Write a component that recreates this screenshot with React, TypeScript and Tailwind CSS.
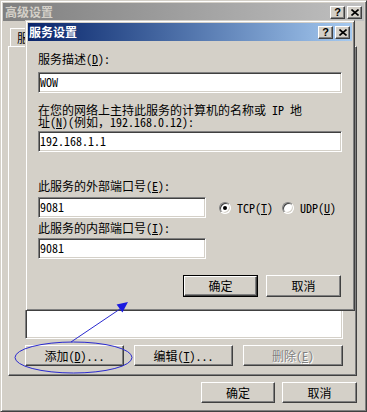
import type { ReactNode } from "react";

const raised =
  "border border-t-white border-l-white border-r-[#404040] border-b-[#404040] shadow-[inset_-1px_-1px_0_#808080]";
const sunken =
  "border border-t-[#808080] border-l-[#808080] border-r-white border-b-white shadow-[inset_1px_1px_0_#404040,inset_-1px_-1px_0_#d4d0c8]";
const frame =
  "border border-t-[#d4d0c8] border-l-[#d4d0c8] border-r-[#404040] border-b-[#404040] shadow-[inset_1px_1px_0_#ffffff,inset_-1px_-1px_0_#808080]";

const CaptionButtons = () => (
  <div className="flex gap-[2px]">
    <div
      className={`${raised} flex h-[13px] w-[15px] items-center justify-center bg-[#d4d0c8] text-[11px] font-bold leading-none text-black [font-family:'Liberation_Sans',sans-serif]`}
    >
      ?
    </div>
    <div className={`${raised} flex h-[13px] w-[15px] items-center justify-center bg-[#d4d0c8]`}>
      <svg width="8" height="7" viewBox="0 0 8 7">
        <path d="M0.5 0.5 L7.5 6.5 M7.5 0.5 L0.5 6.5" stroke="black" strokeWidth="1.6" />
      </svg>
    </div>
  </div>
);

const Button = ({
  children,
  className,
  isDefault,
  disabled,
}: {
  children: ReactNode;
  className: string;
  isDefault?: boolean;
  disabled?: boolean;
}) => {
  const text = disabled ? "text-[#808080] [text-shadow:1px_1px_0_#ffffff]" : "text-black";
  if (isDefault) {
    return (
      <div className={`${className} border border-black`}>
        <div className={`${raised} flex h-full w-full items-center justify-center bg-[#d4d0c8] ${text}`}>
          {children}
        </div>
      </div>
    );
  }
  return (
    <div className={`${className} ${raised} flex items-center justify-center bg-[#d4d0c8] ${text}`}>
      {children}
    </div>
  );
};

const Field = ({ value, className }: { value: string; className: string }) => (
  <div className={`${sunken} ${className} flex h-[21px] items-center bg-white pb-[2px] pl-[1px]`}>
    {value}
  </div>
);

const Radio = ({ checked, label }: { checked?: boolean; label: ReactNode }) => (
  <div className="flex items-center">
    <div className="flex h-[12px] w-[12px] items-center justify-center rounded-full border border-t-[#808080] border-l-[#808080] border-r-white border-b-white bg-white shadow-[inset_1px_1px_0_#404040,inset_-1px_-1px_0_#d4d0c8]">
      {checked && <div className="h-[4px] w-[4px] rounded-full bg-black" />}
    </div>
    <span className="ml-[6px]">{label}</span>
  </div>
);

export default function App() {
  return (
    <div className="relative h-[412px] w-[367px] overflow-hidden bg-[#d4d0c8] text-[12px] leading-[12px] text-black [font-family:'Noto_Sans_Mono_CJK_SC','Noto_Sans_CJK_SC',sans-serif]">
      {/* outer window: 高级设置 */}
      <div className={`${frame} flex h-full w-full flex-col p-[2px]`}>
        <div className="flex h-[18px] items-center justify-between bg-gradient-to-r from-[#808080] to-[#c0c0c0] pl-[2px] pr-[2px]">
          <span className="font-bold text-[#d4d0c8]">高级设置</span>
          <CaptionButtons />
        </div>

        <div className="flex flex-1 flex-col pl-[5px]">
          <div className="mt-[7px] flex h-[18px]">
            <div className="ml-[2px] flex w-[70px] items-center border-l border-t border-r border-l-white border-t-white border-r-[#404040] pl-[6px]">
              服务
            </div>
          </div>

          <div className="flex h-[330px] w-[349px] flex-col justify-end border border-t-white border-l-white border-r-[#404040] border-b-[#404040] pb-[9px] pl-[16px] pr-[13px] shadow-[inset_-1px_-1px_0_#808080]">
            <div className={`${sunken} h-[280px] w-[318px] bg-white`} />
            <div className="mt-[6px] flex w-[318px] justify-between">
              <Button className="h-[21px] w-[99px]">
                添加(<u>D</u>)...
              </Button>
              <Button className="h-[21px] w-[99px]">
                编辑(<u>T</u>)...
              </Button>
              <Button className="h-[21px] w-[100px]" disabled>
                删除(<u>E</u>)
              </Button>
            </div>
          </div>

          <div className="mt-[6px] flex w-[349px] justify-end gap-[7px]">
            <Button className="h-[21px] w-[74px]">确定</Button>
            <Button className="h-[21px] w-[75px]">取消</Button>
          </div>
        </div>
      </div>

      {/* inner dialog: 服务设置 */}
      <div className={`${frame} absolute left-[25px] top-[20px] flex h-[291px] w-[330px] flex-col bg-[#d4d0c8] p-[2px]`}>
        <div className="flex h-[18px] items-center justify-between bg-gradient-to-r from-[#0a246a] to-[#a6caf0] pl-[1px] pr-[2px]">
          <span className="font-bold text-white">服务设置</span>
          <CaptionButtons />
        </div>

        <div className="flex flex-col pl-[10px]">
          <div className="mt-[12px]">
            服务描述(<u>D</u>):
          </div>
          <Field value="WOW" className="mt-[7px] w-[304px]" />

          <div className="mt-[11px]">
            在您的网络上主持此服务的计算机的名称或 IP 地
            <br />
            址(<u>N</u>)(例如，192.168.0.12):
          </div>
          <Field value="192.168.1.1" className="mt-[3px] w-[304px]" />

          <div className="mt-[28px]">
            此服务的外部端口号(<u>E</u>):
          </div>
          <div className="mt-[5px] flex items-center">
            <Field value="9081" className="w-[168px]" />
            <div className="ml-[13px] flex items-center gap-[9px]">
              <Radio
                checked
                label={
                  <>
                    TCP(<u>T</u>)
                  </>
                }
              />
              <Radio
                label={
                  <>
                    UDP(<u>U</u>)
                  </>
                }
              />
            </div>
          </div>

          <div className="mt-[4px]">
            此服务的内部端口号(<u>I</u>):
          </div>
          <Field value="9081" className="mt-[4px] w-[168px]" />

          <div className="mt-[16px] flex justify-end gap-[8px] pr-[11px]">
            <Button className="h-[22px] w-[75px]" isDefault>
              确定
            </Button>
            <Button className="h-[22px] w-[75px]">取消</Button>
          </div>
        </div>
      </div>

      {/* blue annotation */}
      <svg className="pointer-events-none absolute left-0 top-0" width="367" height="412">
        <ellipse cx="73.5" cy="357.5" rx="58.5" ry="15.5" fill="none" stroke="#2a2ad0" strokeWidth="1" />
        <line x1="71" y1="342" x2="120" y2="309" stroke="#2a2ad0" strokeWidth="1" />
        <polygon points="128,302 116.6,304.4 122.4,312.6" fill="#1a1ae0" />
      </svg>
    </div>
  );
}
